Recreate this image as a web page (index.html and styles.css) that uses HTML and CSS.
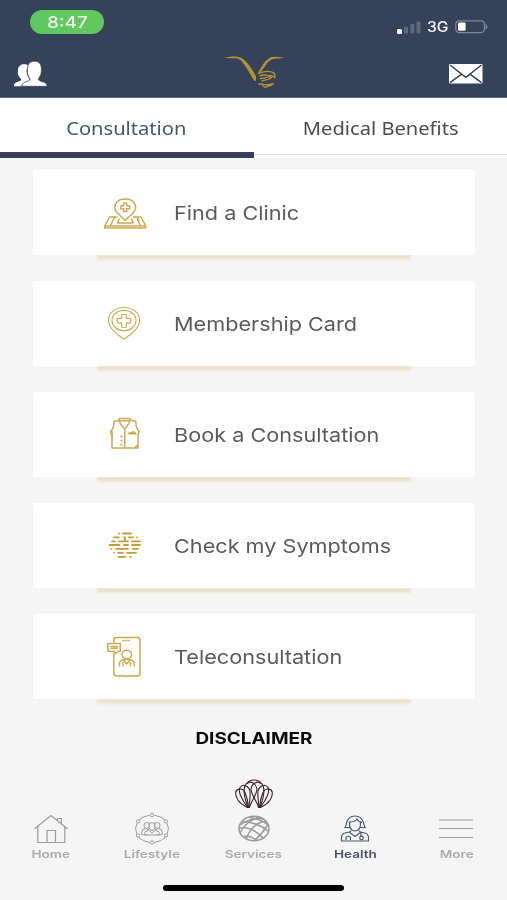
FILE: index.html
```html
<!DOCTYPE html>
<html lang="en">

<head>
    <meta charset="UTF-8">
    <meta name="viewport" content="width=device-width, initial-scale=1">
    <link rel="stylesheet" href="styles.css">
    <title>Health</title>
</head>

<body>
    <header class="header">
        <div class="status-bar">
            <span class="time"><span>8:47</span></span>
            <div class="status-right">
                <svg width="24" height="13" viewBox="0 0 24 13">
                    <rect x="0" y="8" width="5" height="5" rx="1.5" fill="#fff" />
                    <rect x="7" y="5.5" width="4" height="7" rx="1" fill="#5c697f" />
                    <rect x="13.3" y="3" width="4" height="9.5" rx="1" fill="#5c697f" />
                    <rect x="19.5" y="0.5" width="4" height="12" rx="1" fill="#5c697f" />
                </svg>
                <span class="network"><span>3G</span></span>
                <svg width="34" height="14" viewBox="0 0 34 14">
                    <rect x="0.8" y="0.8" width="28.6" height="11.8" rx="3.5" fill="none" stroke="#7c879a" stroke-width="1.2" />
                    <rect x="3" y="2.6" width="7.6" height="8.2" rx="1.3" fill="#fff" />
                    <path d="M31 4.5q2 2.2 0 4.4z" fill="#7c879a" stroke="#7c879a" />
                </svg>
            </div>
        </div>
        <div class="title-bar">
            <svg class="friends" width="34" height="26" viewBox="0 0 34 26">
                <path d="M0 25.300c0-3 1-3.600 4-4.500 2.500-.8 3.600-1.500 3-3-3-2.500-3.500-5-3-9C4.300 5 7 3 10.500 3.200c2 0 3.200.6 4 1.300-2.500 3.500-2 7-1 10 1 2.600 2 4 2.300 4.600-1 2.300-7.800 2-8.300 6.200z" fill="#fff" />
                <path d="M8 25.300c0-3.200 2-3.900 5-4.900 3-.9 3.500-2 2.500-3.500-1.700-1.900-2.400-4.400-2-8.900C13.800 2.500 16 .3 20.600.3c4.300 0 6.500 2.400 6.800 7.700.1 4.500-.9 7-2.500 8.900-1 1.500-.3 2.700 2.400 3.500 4 1.200 5.700 1.900 5.700 4.900z" fill="#fff" stroke="#35425a" stroke-width=".7" />
            </svg>
            <!-- falcon logo -->
            <svg class="logo" width="62" height="34" viewBox="0 0 62 34">
                <g fill="#b3922f">
                    <path d="M0 1.600C4 1 9-.1 14 .8c8 1.700 13 11 18 19.200v5l-2-.5c-2.500-4-4.500-8-7.500-12.500-3.500-5.500-6-9-10-9.700C9 2 5 3 0 1.600z" />
                    <path d="M33.500 17.500c3-4 5.500-11.500 12-15.500C49 .2 55 .8 60 1.800c-5 1-9 .2-13 2-5 3.200-7 9-10.500 12.700z" />
                </g>
                <g fill="none" stroke="#b3922f" stroke-width="1.300" stroke-linecap="round">
                    <path d="M35 17.500c4-1.800 9-2.600 12.500-1.500 3 .8 4 3 3.300 5.700-1.300-2-3-2.300-5.300-2.200M36 19.500q5-1 8 0M44 20l3.500 1.600q-3 2.400-9.500 3.200M36.500 22.500q4 0 7-1.500" />
                    <path d="M35 28q3 .2 6.500.8 4-.3 7.500-.8-2 2-5 2l-2.500 1.600-3-1.800" />
                </g>
            </svg>
            <svg class="mail" width="34" height="20" viewBox="0 0 34 20">
                <rect x="0" y="0" width="33.500" height="19.600" rx="1" fill="#fff" />
                <path d="M1 1l15.800 12.400L32.500 1M1 18.700l11.600-8.600M32.500 18.700l-11.600-8.600" fill="none" stroke="#35425a" stroke-width="1.500" />
            </svg>
        </div>
    </header>

    <nav class="tabs">
        <a class="tab active"><span class="tab-text">Consultation</span></a>
        <a class="tab"><span class="tab-text">Medical Benefits</span></a>
    </nav>

    <main class="menu">
        <a class="card">
            <svg class="card-icon" viewBox="0 0 44 44">
                <path d="M22.200 29.500l-7.500-7.300c-6-6-2-14.300 7.500-14.300s13.500 8.300 7.500 14.300z" />
                <path d="M20.700 12h3v2.700H26.500v3h-2.800V20.500h-3v-2.800h-2.900v-3h2.900z" />
                <path d="M14 26H6.500L1.700 35v2h41.100v-2L38 26h-7.500M1.700 34.900h41.100" />
                <path d="M11.500 26L7.500 34.500M34.500 29l3 5.500M34 26.500l2 3M16 28l-1.500 4h15.600L28.500 28" />
            </svg>
            <span class="card-text">Find a Clinic</span>
        </a>
        <a class="card">
            <svg class="card-icon thin" viewBox="0 0 44 44">
                <path d="M21 37.200C16.500 33.500 5.500 28 5.500 18 5.500 10.500 12.500 5.500 21 5.500S36.600 10.500 36.600 18c0 10-11 15.500-15.600 19.200z" />
                <ellipse cx="21" cy="18.500" rx="12" ry="10.300" />
                <path d="M18.700 12.500h4.600v3.900h4.500v4.500h-4.500v4.300h-4.600v-4.300h-4.500v-4.500h4.500z" />
            </svg>
            <span class="card-text">Membership Card</span>
        </a>
        <a class="card">
            <svg class="card-icon" viewBox="0 0 44 44">
                <path d="M17 5.500h9M17 7.700h9M16 7.500l-5 1c0 5-1 8-3.500 9.700L9 23v12h26V23l1-5c-2.500-1.500-3-4.500-3.200-9.500l-5.600-1.500" />
                <path d="M16 5.500c0 4 2 7 5.800 10.500C25 12.500 27 9.500 27.300 5.500M21.800 16v19" />
                <path d="M25.500 20.500l3-1 2.500-.8 2 2h-6M9 18v7M34.500 32l-2.500 2.500" />
                <path class="dots" d="M18.500 23.400v.1M18.500 27.500v.1M18.500 31.600v.1" />
            </svg>
            <span class="card-text">Book a Consultation</span>
        </a>
        <a class="card">
            <svg class="card-icon dashes" viewBox="0 0 44 44">
                <path d="M16 9.500h.1M20 9.500h8M11 13.300h5M21 13.300h.1M26 13.300h4M34 13.300h.1M9 17.300h3M16 17.300h9M29 17.300h8M6.500 21h10M21 21h4M29 21h8M8 24.800h.1M13 24.800h12M30 24.800h5M11 28.800h.1M15 28.800h5M24 28.800h9M15.500 32.800h7M27 32.800h1M22 13.500v3" />
            </svg>
            <span class="card-text">Check my Symptoms</span>
        </a>
        <a class="card">
            <svg class="card-icon" viewBox="0 0 44 44">
                <path d="M10.800 8V5q0-2.500 2.500-2.500h21.200q2.500 0 2.500 2.500v33.500q0 2.500-2.500 2.500H13.300q-2.500 0-2.500-2.500V18.500" />
                <path d="M4.800 8.500h12.500v7.800h-2l-2.500 2.200-2-2.200h-6zM8 11.500h6.500M8 13.200h6" />
                <path d="M20 5.500h8" stroke-dasharray="2 2" />
                <ellipse cx="23.800" cy="19.500" rx="4.800" ry="4.200" />
                <path d="M16.500 31v-2.500c0-3 3-4 7.300-4.300 4.500.3 7.400 1.500 7.400 4.300V31M20 31v-3.500M27.500 31v-3.500M20.500 25l3.300 4 3.400-4" />
            </svg>
            <span class="card-text">Teleconsultation</span>
        </a>
    </main>

    <section class="disclaimer">
        <span class="disclaimer-text">DISCLAIMER</span>
        <svg class="shell" width="38" height="30" viewBox="0 0 38 30">
            <!-- left fan -->
            <path d="M12 28C4 25 0 18 .8 13 2 9 8 9 10 13.500 12 18 13 23 13.500 28" />
            <path d="M12.500 28C6 20 3 12 5 8.500 8 4 14 7 15 12 15.500 18 14.500 23 14 28" />
            <path d="M13 28C9 18 8 9 11 5 15 1 21 4 22 10 22 15 17 21 14.500 28" />
            <!-- right fan -->
            <path d="M26 28c8-3 12-10 11.200-15C36 9 30 9 28 13.500 26 18 25 23 24.500 28" />
            <path d="M25.500 28C32 20 35 12 33 8.500 30 4 24 7 23 12 22.500 18 23.500 23 24 28" />
            <path d="M25 28C29 18 30 9 27 5 23 1 17 4 16 10 16 15 21 21 23.500 28" />
            <path d="M12.500 4.500C14-.2 24-.2 25.500 4.500M11.500 28.500h3.500M23 28.500h3.500" />
        </svg>
    </section>

    <footer class="bottom-nav">
        <a class="nav-item">
            <svg width="36" height="32" viewBox="0 0 36 32">
                <path d="M1.500 15.800L18 2.500l16.500 13.300M4.800 13.500v16h27v-16M14 29.500V17.500h8.500v12M24.500 7.700V5.500h3.800v5.300" />
            </svg>
            <span>Home</span>
        </a>
        <a class="nav-item">
            <svg class="fine" width="36" height="32" viewBox="0 0 36 32">
                <path d="M15.500 2.300Q9 3 5 7M3 10.500Q0 15 3 21M5 24.500q4 4 10.500 5M20.500 2.300Q27 3 31 7M33 10.500q3 4.500 0 10.500M31 24.500q-4 4-10.500 5" />
                <circle cx="18" cy="2.200" r="1.700" />
                <circle cx="4" cy="8.500" r="1.700" />
                <circle cx="32" cy="8.500" r="1.700" />
                <circle cx="4" cy="22.500" r="1.700" />
                <circle cx="32" cy="22.500" r="1.700" />
                <circle cx="18" cy="29.500" r="1.700" />
                <ellipse cx="12.800" cy="12.500" rx="2.800" ry="3" />
                <ellipse cx="23.200" cy="12.500" rx="2.800" ry="3" />
                <path d="M15 10h6v5q-3 5-6 0zM13.500 21.800H7.800v-3q0-3 4-3.300l3 1M22.500 21.800h5.700v-3q0-3-4-3.300l-3 1M10.500 22v-1.500q0-2.500 4.500-3.300l3 2.800 3-2.800q4.500.8 4.500 3.300V22z" />
            </svg>
            <span>Lifestyle</span>
        </a>
        <a class="nav-item">
            <svg class="globe" width="36" height="32" viewBox="0 0 36 32">
                <ellipse cx="18" cy="15.500" rx="15" ry="12.300" />
                <path d="M4 12Q15 4 27 6M4 20Q10 8 24 3.800M10.500 25.500Q16 10 30 8M18.500 27.500Q26 21 32 11.500" />
                <path d="M6 8.500Q18 8 32.500 18M3.500 15Q16 13 27 25M8 23.500Q14 22 21 27.500M13 4.500Q25 6 32 12" />
            </svg>
            <span>Services</span>
        </a>
        <a class="nav-item active">
            <svg width="36" height="32" viewBox="0 0 36 32">
                <path d="M13 14.500H8Q9.500 12 9.500 9.500 11.500 3 18 3t8.500 6.500q0 2.500 1.800 5H23M11.500 9q6 .5 8.500-3 1.500 3 5 3.300M12.500 9.500q-.5 8 5.500 8.500 6-.5 5.500-8.500" />
                <path d="M14 17.500q0 1.500-6 2.500-3.500 1-3.500 5v3h27v-3q0-4-3.500-5-6-1-6-2.500M12 19l6 4.500 6-4.500M9 27v-2.500q2-2.500 4.500 0V27M24 19v4.500" />
                <circle cx="24.500" cy="25" r="1.800" />
            </svg>
            <span>Health</span>
        </a>
        <a class="nav-item">
            <svg width="36" height="32" viewBox="0 0 36 32">
                <path d="M1 7h34M1 15.500h34M1 24.500h34" />
            </svg>
            <span>More</span>
        </a>
    </footer>
    <div class="home-indicator"></div>
</body>

</html>
```
FILE: styles.css
```css
* {
    box-sizing: border-box;
}

body {
    margin: 0;
    width: 507px;
    height: 900px;
    overflow: hidden;
    font-family: Inter, "Liberation Sans", sans-serif;
    background-color: #f5f5f5;
    display: flex;
    flex-direction: column;
}

svg {
    display: block;
    flex-shrink: 0;
}

.header {
    height: 98px;
    background-color: #35425a;
    border-bottom: 1px solid #5d6880;
}

.status-bar {
    height: 46px;
    padding: 10px 18px 0 30px;
    display: flex;
    justify-content: space-between;
}

.time {
    width: 74px;
    height: 24px;
    border-radius: 12px;
    background-color: #60c85e;
    color: #f4fff4;
    font-size: 16px;
    font-weight: 500;
    line-height: 24px;
    text-align: center;
}

.time span {
    display: inline-block;
    transform: scaleX(1.18);
}

.status-right {
    display: flex;
    align-items: center;
    height: 14px;
    margin-top: 10px;
}

.network {
    color: #f2f4f7;
    font-size: 14px;
    font-weight: 500;
    width: 28px;
    padding-left: 6px;
    margin-right: 6px;
    line-height: 14px;
}

.network span {
    display: inline-block;
    transform: scaleX(1.12);
    transform-origin: left;
}

.title-bar {
    display: flex;
    justify-content: space-between;
    padding: 10px 24px 0 14px;
}

.friends {
    margin-top: 5px;
}

.mail {
    margin-top: 8px;
}

.logo {
    margin-left: 13px;
}

.tabs {
    display: flex;
    height: 60px;
    background-color: #fff;
}

.tab {
    width: 254px;
    height: 57px;
    padding-top: 18px;
    border-bottom: 1px solid #e6e6e6;
    text-align: center;
    font-family: "Noto Sans", "Open Sans", sans-serif;
    font-size: 17.5px;
    line-height: 24px;
    color: #4b4c50;
}

.tab.active {
    height: 60px;
    border-bottom: 6px solid #35425a;
    color: #4d556b;
}

.tab-text {
    display: inline-block;
    white-space: nowrap;
    transform: scaleX(1.15);
}

.menu {
    padding: 12px 32px 0 33px;
    display: flex;
    flex-direction: column;
    gap: 26px;
}

.card {
    position: relative;
    height: 85px;
    padding-left: 70px;
    display: flex;
    align-items: center;
    gap: 27px;
    border-radius: 2px;
    background-color: #fff;
}

/* gold strip under every card */
.card::after {
    content: "";
    position: absolute;
    left: 64px;
    right: 64px;
    top: 100%;
    height: 5px;
    background: linear-gradient(#e6dcc0, #eee9d8);
    filter: blur(1px);
    clip-path: inset(0 -4px -4px -4px);
}

.card-icon {
    width: 44px;
    height: 44px;
    fill: none;
    stroke: #cdaa50;
    stroke-width: 1.5;
    stroke-linejoin: round;
    stroke-linecap: round;
}

.card-icon.thin {
    stroke-width: 1.1;
}

.card-icon.dashes {
    stroke: #c39c3b;
    stroke-width: 1.8;
}

.dots {
    stroke-width: 2.2;
}

.card-text {
    padding-top: 2px;
    font-size: 19px;
    color: #5b5b5b;
    white-space: nowrap;
    transform: scaleX(1.14);
    transform-origin: left;
}

.disclaimer {
    display: flex;
    flex-direction: column;
    align-items: center;
    padding-top: 30px;
    height: 112px;
}

.disclaimer-text {
    font-size: 15.5px;
    font-weight: 700;
    line-height: 20px;
    color: #0b0b0b;
    transform: scaleX(1.22);
}

.shell {
    margin-top: 30px;
    fill: none;
    stroke: #3a2028;
    stroke-width: 1.1;
}

.bottom-nav {
    display: flex;
    height: 74px;
    padding-top: 2px;
}

.nav-item {
    flex: 1;
    display: flex;
    flex-direction: column;
    align-items: center;
    color: #aaa;
    font-size: 11px;
    font-weight: 600;
    line-height: 14px;
}

.nav-item svg {
    fill: none;
    stroke: #9b9b9b;
    stroke-width: 1.2;
}

.nav-item svg.fine {
    stroke-width: 1;
}

.nav-item svg.globe {
    stroke-width: 1.5;
}

.nav-item span {
    margin-top: 2px;
    transform: scaleX(1.23);
}

.nav-item.active {
    color: #4b5268;
}

.nav-item.active svg {
    stroke: #4b5870;
}

.home-indicator {
    width: 181px;
    height: 6px;
    border-radius: 3px;
    background-color: #000;
    margin: 0 auto;
}
```
